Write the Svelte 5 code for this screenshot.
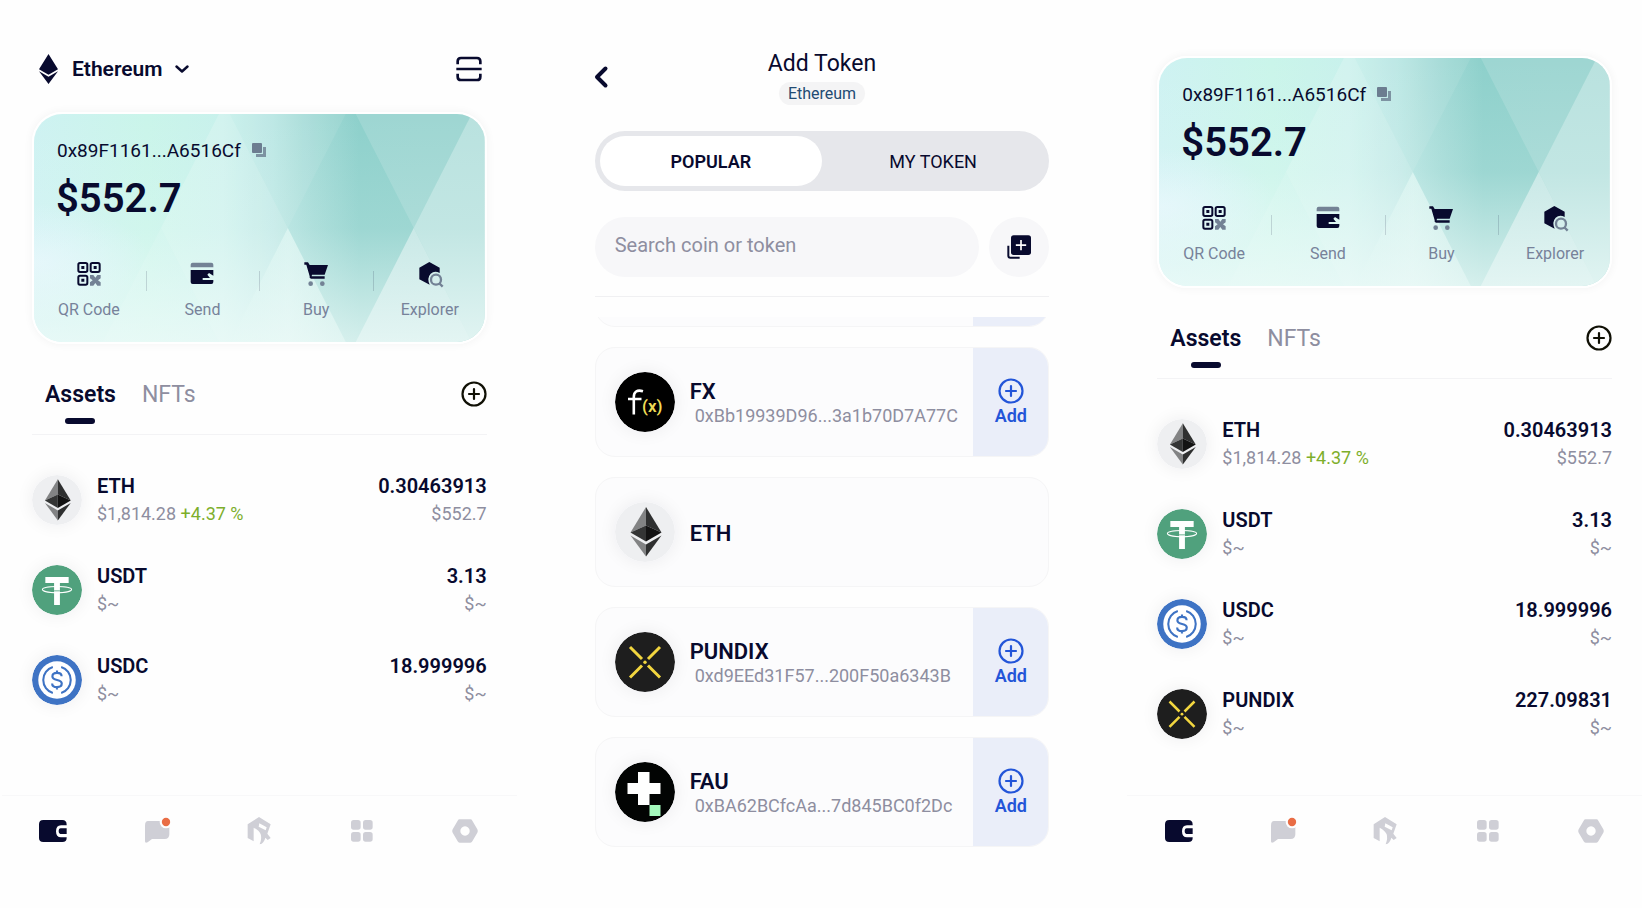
<script>
	const ethAsset = { symbol: 'ETH', icon: 'eth', price: '$1,814.28', change: '+4.37 %', amount: '0.30463913', value: '$552.7' };
	const usdt = { symbol: 'USDT', icon: 'usdt', price: '$~', amount: '3.13', value: '$~' };
	const usdc = { symbol: 'USDC', icon: 'usdc', price: '$~', amount: '18.999996', value: '$~' };
	const pundix = { symbol: 'PUNDIX', icon: 'pundix', price: '$~', amount: '227.09831', value: '$~' };

	const before = [ethAsset, usdt, usdc];
	const after = [ethAsset, usdt, usdc, pundix];

	const tokens = [
		{ symbol: 'FX', icon: 'fx', address: '0xBb19939D96...3a1b70D7A77C' },
		{ symbol: 'ETH', icon: 'eth' },
		{ symbol: 'PUNDIX', icon: 'pundix', address: '0xd9EEd31F57...200F50a6343B' },
		{ symbol: 'FAU', icon: 'fau', address: '0xBA62BCfcAa...7d845BC0f2Dc' }
	];

	const actions = ['QR Code', 'Send', 'Buy', 'Explorer'];
	const navItems = ['Wallet', 'Messages', 'Explore', 'Apps', 'Settings'];

	let tokenTab = $state('POPULAR');
	let search = $state('');
</script>

{#snippet coin(icon)}
	<svg class="coin" viewBox="0 0 60 60" aria-hidden="true">
		{#if icon === 'eth'}
			<circle cx="30" cy="30" r="30" fill="#eeeff1" />
			<path d="M31 5v18.500L15.500 30.500z" fill="#828384" />
			<path d="M31 5v18.500L46.500 30.500z" fill="#2f3030" />
			<path d="M31 23.500v16L15.500 30.500z" fill="#343535" />
			<path d="M31 23.500v16l15.500-9z" fill="#131313" />
			<path d="M31 42.500V54.500L15.500 33.500z" fill="#828384" />
			<path d="M31 42.500V54.500l15.500-21z" fill="#2f3030" />
		{:else if icon === 'usdt'}
			<circle cx="30" cy="30" r="30" fill="#50a17d" />
			<path d="M16 14.500h28v7H33.500V48h-7V21.500H16z" fill="#fff" />
			<ellipse cx="30" cy="29.500" rx="17.500" ry="3.800" fill="none" stroke="#fff" stroke-width="1.300" />
			<path d="M26.500 31h7" stroke="#50a17d" stroke-width="1" />
		{:else if icon === 'usdc'}
			<circle cx="30" cy="30" r="30" fill="#3e73c4" />
			<circle cx="30" cy="30" r="22.500" fill="#fff" />
			<path d="M25 14.500a16.200 16.200 0 0 0 0 31M35 14.500a16.200 16.200 0 0 1 0 31" fill="none" stroke="#3e73c4" stroke-width="2.500" />
			<path d="M35.500 25.500c0-2.500-2.200-4-5.500-4s-5.500 1.600-5.500 4.200c0 5.800 11.200 2.700 11.200 8.500 0 2.600-2.400 4.300-5.700 4.300s-5.800-1.700-5.800-4.400M30 18.500v3M30 38.500v3" fill="none" stroke="#3e73c4" stroke-width="2.600" />
		{:else if icon === 'pundix'}
			<circle cx="30" cy="30" r="30" fill="#1e1e1e" />
			<path d="M15 15l12 12M45 15L33 27M15 45.500l12-12M45 45.500l-12-12" stroke="#f2d63f" stroke-width="3" />
			<circle cx="30" cy="30.200" r="1.700" fill="#f2d63f" />
		{:else if icon === 'fx'}
			<circle cx="30" cy="30" r="30" fill="#000" />
			<path d="M28 19.200c-6-1.700-9.200.500-9.200 5.800v17.500M13 27h13.500" fill="none" stroke="#fff" stroke-width="2.600" />
			<text x="27" y="40" class="fx-mark">(x)</text>
		{:else}
			<circle cx="30" cy="30" r="30" fill="#020403" />
			<path d="M23 10h11.500v11H45.500v11H34.500v11H23V32H12.500V21H23z" fill="#fff" />
			<path d="M34.500 43h11v11h-11z" fill="#a4fabd" />
		{/if}
	</svg>
{/snippet}

{#snippet actionIcon(name)}
	<svg class="action-icon" viewBox="0 0 72 72" aria-hidden="true">
		{#if name === 'QR Code'}
			<g fill="none" stroke="#080a2e" stroke-width="6">
				<rect x="4" y="3" width="27" height="27" rx="5" />
				<rect x="41" y="3" width="27" height="27" rx="5" />
				<rect x="4" y="41" width="27" height="27" rx="5" />
			</g>
			<path d="M13 12h9v9h-9zM50 12h9v9h-9zM13 50h9v9h-9z" fill="#080a2e" />
			<path d="M39 39h10l6 8 6-8h10v10l-8 6 8 6v10H61l-6-8-6 8H39V61l8-6-8-6z" fill="#738295" />
		{:else if name === 'Send'}
			<path d="M2 16V8q0-6 6-6h56q6 0 6 6v8z" fill="#738295" />
			<path d="M2 24h68v17L57 33l-5 5 8 10H38v6h32v6q0 6-6 6H8q-6 0-6-6z" fill="#080a2e" />
		{:else if name === 'Buy'}
			<path d="M1 1h11l5 8h55L62 38H24l-1 5h39v7H21q-6-1-4-7L7 8H1z" fill="#080a2e" />
			<circle cx="20" cy="65" r="7" fill="#738295" />
			<circle cx="55" cy="65" r="7" fill="#738295" />
		{:else}
			<path d="M34 0l31 17v16Q50 24 38 35q-12 13-3 33L4 52V17z" fill="#080a2e" />
			<circle cx="54" cy="53" r="15" fill="none" stroke="#738295" stroke-width="7" />
			<path d="M63 63l11 11" stroke="#738295" stroke-width="7" />
		{/if}
	</svg>
{/snippet}

{#snippet plusIcon()}
	<svg class="plus-icon" viewBox="0 0 26 26" aria-hidden="true">
		<circle cx="13" cy="13" r="11.500" />
		<path d="M13 8v10M8 13h10" />
	</svg>
{/snippet}

{#snippet walletCard()}
	<section class="card">
		<svg class="card-art" viewBox="0 0 451 228" preserveAspectRatio="none" aria-hidden="true">
			<defs>
				<linearGradient id="card-base">
					<stop offset="0" stop-color="#cef2f2" />
					<stop offset="0.250" stop-color="#caf5ea" />
					<stop offset="0.420" stop-color="#c8f1ec" />
					<stop offset="0.530" stop-color="#b8e6e3" />
					<stop offset="0.620" stop-color="#a2dad6" />
					<stop offset="0.720" stop-color="#8dd0cb" />
					<stop offset="1" stop-color="#8fd0cb" />
				</linearGradient>
				<linearGradient id="card-fade" x1="0" y1="0" x2="0" y2="1">
					<stop offset="0" stop-color="#f0fbf9" stop-opacity="0" />
					<stop offset="0.500" stop-color="#f0fbf9" stop-opacity="0.160" />
					<stop offset="1" stop-color="#f0fbf9" stop-opacity="0.720" />
				</linearGradient>
				<radialGradient id="card-glow" cx="0" cy="0.650" r="0.260">
					<stop offset="0" stop-color="#e0f5fb" />
					<stop offset="1" stop-color="#e0f5fb" stop-opacity="0" />
				</radialGradient>
				<linearGradient id="card-wedge" x1="0" y1="0" x2="1" y2="0">
					<stop offset="0" stop-color="#e4f9f5" stop-opacity="0.300" />
					<stop offset="0.500" stop-color="#e4f9f5" stop-opacity="0.700" />
					<stop offset="1" stop-color="#e4f9f5" stop-opacity="0.500" />
				</linearGradient>
			</defs>
			<rect width="451" height="228" fill="url(#card-base)" />
			<rect width="451" height="228" fill="url(#card-glow)" />
			<g fill="#fff">
				<path d="M185 0h11l58 114-58 114h-11L127 114z" opacity="0.180" />
				<path d="M127 114l58 114H69z" opacity="0.100" />
				<path d="M196 0h116l-58 114z" opacity="0.080" />
				<path d="M254 114l58 114H196z" fill="url(#card-wedge)" />
				<path d="M322 0h116l-58 114z" opacity="0.140" />
				<path d="M438 0h13v228h-13l-58-114z" opacity="0.380" />
				<path d="M380 114l58 114H322z" opacity="0.460" />
			</g>
			<rect width="451" height="228" fill="url(#card-fade)" />
		</svg>
		<div class="card-body">
			<div class="address">
				<span>0x89F1161...A6516Cf</span>
				<button class="icon-btn" aria-label="Copy address">
					<svg width="14" height="14" viewBox="0 0 42 42" aria-hidden="true">
						<path d="M33 12h9v30H12v-9h21z" fill="#6c7d90" opacity="0.800" />
						<rect width="30" height="30" rx="3" fill="#6c7d90" />
					</svg>
				</button>
			</div>
			<div class="balance">$552.7</div>
			<div class="actions">
				{#each actions as name}
					<button class="action">
						{@render actionIcon(name)}
						<span>{name}</span>
					</button>
				{/each}
			</div>
		</div>
	</section>
{/snippet}

{#snippet assetList(assets)}
	<div class="tabs">
		<button class="tab active">Assets</button>
		<button class="tab">NFTs</button>
		<button class="icon-btn add-asset" aria-label="Add asset">{@render plusIcon()}</button>
	</div>
	<ul class="assets">
		{#each assets as asset}
			<li class="asset">
				{@render coin(asset.icon)}
				<div class="asset-info">
					<strong>{asset.symbol}</strong>
					<span>
						{asset.price}
						{#if asset.change}<em>{asset.change}</em>{/if}
					</span>
				</div>
				<div class="asset-info amount">
					<strong>{asset.amount}</strong>
					<span>{asset.value}</span>
				</div>
			</li>
		{/each}
	</ul>
{/snippet}

{#snippet bottomNav()}
	<nav class="nav">
		{#each navItems as item, i}
			<button class="icon-btn" class:current={i === 0} aria-label={item}>
				<svg width="28" height="28" viewBox="0 0 84 84" aria-hidden="true">
					{#if item === 'Wallet'}
						<path d="M13 9h57q13 0 13 14v2H66q-15 0-15 18t15 18h17v2q0 12-13 12H13Q0 75 0 63V22Q0 9 13 9z" fill="currentColor" />
						<path d="M83 34H65q-6 0-6 9t6 8h18z" fill="currentColor" />
					{:else if item === 'Messages'}
						<path d="M18 12h56q8 0 8 10v30q0 14-14 14H30L17 76q-8 4-8-3V26q0-14 9-14z" fill="currentColor" />
						<circle cx="72" cy="15" r="19" fill="#fefefe" />
						<circle cx="72" cy="15" r="12.500" fill="#e96d45" />
					{:else if item === 'Explore'}
						<path d="M42 0l35 22-10 28 10 13-9 6-7-7q-4 17-17 20 7-17 3-30-4-11-21-20v41L8 63V22zM43 19l22 12-3 9-21-11z" fill="currentColor" fill-rule="evenodd" />
					{:else if item === 'Apps'}
						<rect x="9" y="9" width="29" height="29" rx="8" fill="currentColor" />
						<rect x="45" y="9" width="29" height="29" rx="8" fill="currentColor" />
						<rect x="9" y="45" width="29" height="29" rx="8" fill="currentColor" />
						<rect x="45" y="45" width="29" height="29" rx="8" fill="currentColor" />
					{:else}
						<path d="M26 7h32q4 0 6 4l15 26q3 5 0 10L64 73q-2 4-6 4H26q-4 0-6-4L5 47q-3-5 0-10l15-26q2-4 6-4zM42 28a14 14 0 1 0 .1 0z" fill="currentColor" fill-rule="evenodd" />
					{/if}
				</svg>
			</button>
		{/each}
	</nav>
{/snippet}

<main class="board">
	<section class="screen">
		<header class="wallet-header">
			<button class="network">
				<svg width="19" height="30" viewBox="0 0 57 90" aria-hidden="true">
					<path d="M28.500 0L57 46 28.500 62 0 46zM0 52l28.500 16L57 52 28.500 90z" fill="currentColor" />
				</svg>
				<span>Ethereum</span>
				<svg width="14" height="8" viewBox="0 0 14 8" aria-hidden="true">
					<path d="M1.500 1.500l5.500 5 5.500-5" fill="none" stroke="currentColor" stroke-width="2.400" stroke-linecap="round" stroke-linejoin="round" />
				</svg>
			</button>
			<button class="icon-btn scan" aria-label="Scan">
				<svg width="26" height="26" viewBox="0 0 78 78" aria-hidden="true">
					<path d="M5 25v-9q0-10 10-10h48q10 0 10 10v9M5 53v9q0 10 10 10h48q10 0 10-10v-9M1 39h76" fill="none" stroke="currentColor" stroke-width="8" />
				</svg>
			</button>
		</header>
		{@render walletCard()}
		{@render assetList(before)}
		{@render bottomNav()}
	</section>

	<section class="screen">
		<header class="token-header">
			<button class="icon-btn" aria-label="Back">
				<svg width="13" height="22" viewBox="0 0 13 22" aria-hidden="true">
					<path d="M10.500 2.500L2 11l8.500 8.500" fill="none" stroke="currentColor" stroke-width="4" stroke-linecap="round" stroke-linejoin="round" />
				</svg>
			</button>
			<div class="title">
				<h1>Add Token</h1>
				<span class="pill">Ethereum</span>
			</div>
		</header>
		<div class="segments">
			{#each ['POPULAR', 'MY TOKEN'] as name}
				<button class="segment" class:selected={tokenTab === name} onclick={() => (tokenTab = name)}>{name}</button>
			{/each}
		</div>
		<div class="search-row">
			<input type="text" aria-label="Search coin or token" placeholder="Search coin or token" bind:value={search} />
			<button class="icon-btn custom-token" aria-label="Add custom token">
				<svg width="24" height="24" viewBox="0 0 72 72" aria-hidden="true">
					<path d="M4 32v30q0 6 6 6h28" fill="none" stroke="#080a2e" stroke-width="6" />
					<rect x="12" y="1" width="60" height="59" rx="8" fill="#080a2e" />
					<path d="M42 15v31M26.500 30.500h31" stroke="#fff" stroke-width="5" />
				</svg>
			</button>
		</div>
		<div class="tokens">
			<div class="peek" aria-hidden="true">
				<div class="token"><div class="token-end"></div></div>
			</div>
			{#each tokens as token}
				<article class="token">
					{@render coin(token.icon)}
					<div class="token-info">
						<strong>{token.symbol}</strong>
						{#if token.address}<span>{token.address}</span>{/if}
					</div>
					{#if token.address}
						<button class="token-end">
							{@render plusIcon()}
							<span>Add</span>
						</button>
					{/if}
				</article>
			{/each}
		</div>
	</section>

	<section class="screen scrolled">
		{@render walletCard()}
		{@render assetList(after)}
		{@render bottomNav()}
	</section>
</main>

<style>
	:global(body) {
		background: #fefefe;
	}

	.board {
		--ink: #080a2e;
		--muted: #8e8ea0;
		display: grid;
		grid-template-columns: repeat(3, minmax(0, 1fr));
		gap: 46px;
		min-height: 100vh;
		font-family: Roboto, 'Liberation Sans', sans-serif;
		color: var(--ink);
	}

	.screen {
		display: flex;
		flex-direction: column;
		padding: 44px 30px 0 32px;
	}

	.scrolled {
		padding-top: 56px;
	}

	button {
		border: none;
		background: none;
		padding: 0;
		margin: 0;
		font: inherit;
		color: inherit;
		cursor: pointer;
	}

	.icon-btn {
		display: flex;
		align-items: center;
		justify-content: center;
	}

	.wallet-header {
		display: flex;
		align-items: center;
		justify-content: space-between;
		height: 50px;
		margin-bottom: 18px;
		padding: 0 5px 0 7px;
	}

	.network {
		display: flex;
		align-items: center;
		gap: 12px;
		font-size: 21px;
		font-weight: 600;
	}

	.network span {
		padding-left: 2px;
	}

	.card {
		position: relative;
		overflow: hidden;
		border: 2px solid #fff;
		border-radius: 30px;
		box-shadow: 0 0 10px rgba(8, 10, 46, 0.05);
	}

	.card-art {
		position: absolute;
		inset: 0;
		width: 100%;
		height: 100%;
	}

	.card-body {
		position: relative;
		padding: 22px 0 20px;
	}

	.address {
		display: flex;
		align-items: center;
		gap: 11px;
		height: 28px;
		padding: 0 23px;
		font-size: 19px;
	}

	.balance {
		padding: 0 22px;
		margin: 11px 0 39px;
		font-size: 40px;
		line-height: 48px;
		font-weight: 600;
	}

	.actions {
		display: grid;
		grid-template-columns: repeat(4, 1fr);
		margin: 0 -2px;
	}

	.action {
		position: relative;
		display: flex;
		flex-direction: column;
		align-items: center;
		gap: 12px;
		font-size: 16px;
		line-height: 24px;
		color: #77829a;
	}

	.action + .action::before {
		content: '';
		position: absolute;
		left: 0;
		top: 9px;
		width: 1px;
		height: 20px;
		background: rgba(8, 10, 46, 0.15);
	}

	.action-icon {
		width: 24px;
		height: 24px;
		overflow: visible;
	}

	.tabs {
		display: flex;
		align-items: flex-start;
		gap: 26px;
		margin-top: 37px;
		padding: 0 0 10px 13px;
		border-bottom: 1px solid #f3f3f5;
	}

	.tab {
		display: flex;
		flex-direction: column;
		align-items: center;
		gap: 9px;
		font-size: 23px;
		line-height: 28px;
		color: var(--muted);
	}

	.tab.active {
		font-weight: 600;
		color: var(--ink);
	}

	.tab::after {
		content: '';
		width: 30px;
		height: 6px;
		border-radius: 3px;
	}

	.tab.active::after {
		background: var(--ink);
	}

	.plus-icon {
		width: 26px;
		height: 26px;
		fill: none;
		stroke: currentColor;
		stroke-width: 2.2;
		stroke-linecap: round;
	}

	.add-asset {
		margin-left: auto;
		color: #101005;
	}

	.assets {
		display: flex;
		flex-direction: column;
		gap: 34px;
		margin: 37px 0 0;
		padding: 0;
		list-style: none;
	}

	.asset {
		display: flex;
		align-items: center;
		gap: 15px;
	}

	.coin {
		flex: none;
		width: 50px;
		height: 50px;
		border-radius: 50%;
		box-shadow: 0 0 18px rgba(8, 10, 46, 0.07);
	}

	.fx-mark {
		font: 600 17px Roboto, sans-serif;
		fill: #eedb55;
	}

	.asset-info {
		display: flex;
		flex-direction: column;
		font-size: 18px;
		line-height: 28px;
		color: var(--muted);
	}

	.asset-info strong {
		font-size: 20px;
		font-weight: 600;
		color: var(--ink);
	}

	.asset-info em {
		font-style: normal;
		color: #7dae2b;
	}

	.amount {
		margin-left: auto;
		text-align: right;
	}

	.nav {
		display: grid;
		grid-template-columns: repeat(5, 1fr);
		margin: auto -30px 0;
		padding: 21px 0 63px;
		border-top: 1px solid #f8f8f9;
		color: #cfcfd6;
	}

	.nav .current {
		color: var(--ink);
	}

	.nav svg {
		overflow: visible;
	}

	.token-header {
		display: grid;
		grid-template-columns: 13px 1fr 13px;
		align-items: center;
		margin-bottom: 26px;
		padding-top: 5px;
	}

	.token-header svg {
		overflow: visible;
	}

	.title {
		display: flex;
		flex-direction: column;
		align-items: center;
		gap: 3px;
	}

	h1 {
		margin: 0;
		font-size: 23px;
		line-height: 30px;
		font-weight: 400;
	}

	.pill {
		padding: 0 9px;
		border-radius: 12px;
		background: #f4f4f5;
		font-size: 16px;
		line-height: 23px;
		color: #224b73;
	}

	.segments {
		display: grid;
		grid-template-columns: 1fr 1fr;
		padding: 5px;
		border-radius: 30px;
		background: #e6e7eb;
	}

	.segment {
		height: 50px;
		border-radius: 25px;
		font-size: 18px;
	}

	.segment.selected {
		background: #fff;
		font-weight: 600;
	}

	.search-row {
		display: flex;
		gap: 10px;
		margin-top: 26px;
		padding-bottom: 19px;
		border-bottom: 1px solid #f0f0f2;
	}

	input {
		flex: 1;
		min-width: 0;
		height: 60px;
		box-sizing: border-box;
		padding: 0 20px 4px;
		border: none;
		border-radius: 30px;
		background: #f7f7f9;
		font: inherit;
		font-size: 20px;
		color: var(--ink);
		outline: none;
	}

	input::placeholder {
		color: var(--muted);
		opacity: 1;
	}

	.custom-token {
		width: 60px;
		height: 60px;
		border-radius: 50%;
		background: #f7f7f9;
	}

	.tokens {
		display: flex;
		flex-direction: column;
		gap: 20px;
		margin-top: 20px;
	}

	.peek {
		display: flex;
		flex-direction: column;
		justify-content: flex-end;
		height: 10px;
		overflow: hidden;
	}

	.token {
		flex: none;
		display: flex;
		align-items: center;
		gap: 15px;
		height: 110px;
		box-sizing: border-box;
		padding-left: 19px;
		border: 1px solid #f5f5f6;
		border-radius: 20px;
		background: #fcfcfd;
		overflow: hidden;
	}

	.token .coin {
		width: 60px;
		height: 60px;
	}

	.token-info {
		display: flex;
		flex-direction: column;
		min-width: 0;
		padding-top: 4px;
	}

	.token-info strong {
		font-size: 22px;
		line-height: 24px;
		font-weight: 600;
	}

	.token-info span {
		padding-left: 5px;
		font-size: 18px;
		line-height: 24px;
		color: var(--muted);
	}

	.token-end {
		flex: none;
		display: flex;
		flex-direction: column;
		align-items: center;
		justify-content: center;
		width: 75px;
		height: 110px;
		box-sizing: border-box;
		margin-left: auto;
		padding-top: 2px;
		background: #eaeef9;
		font-size: 18px;
		line-height: 24px;
		font-weight: 600;
		color: #2355d8;
	}

	.token-info + .token-end {
		margin-left: auto;
	}
</style>
